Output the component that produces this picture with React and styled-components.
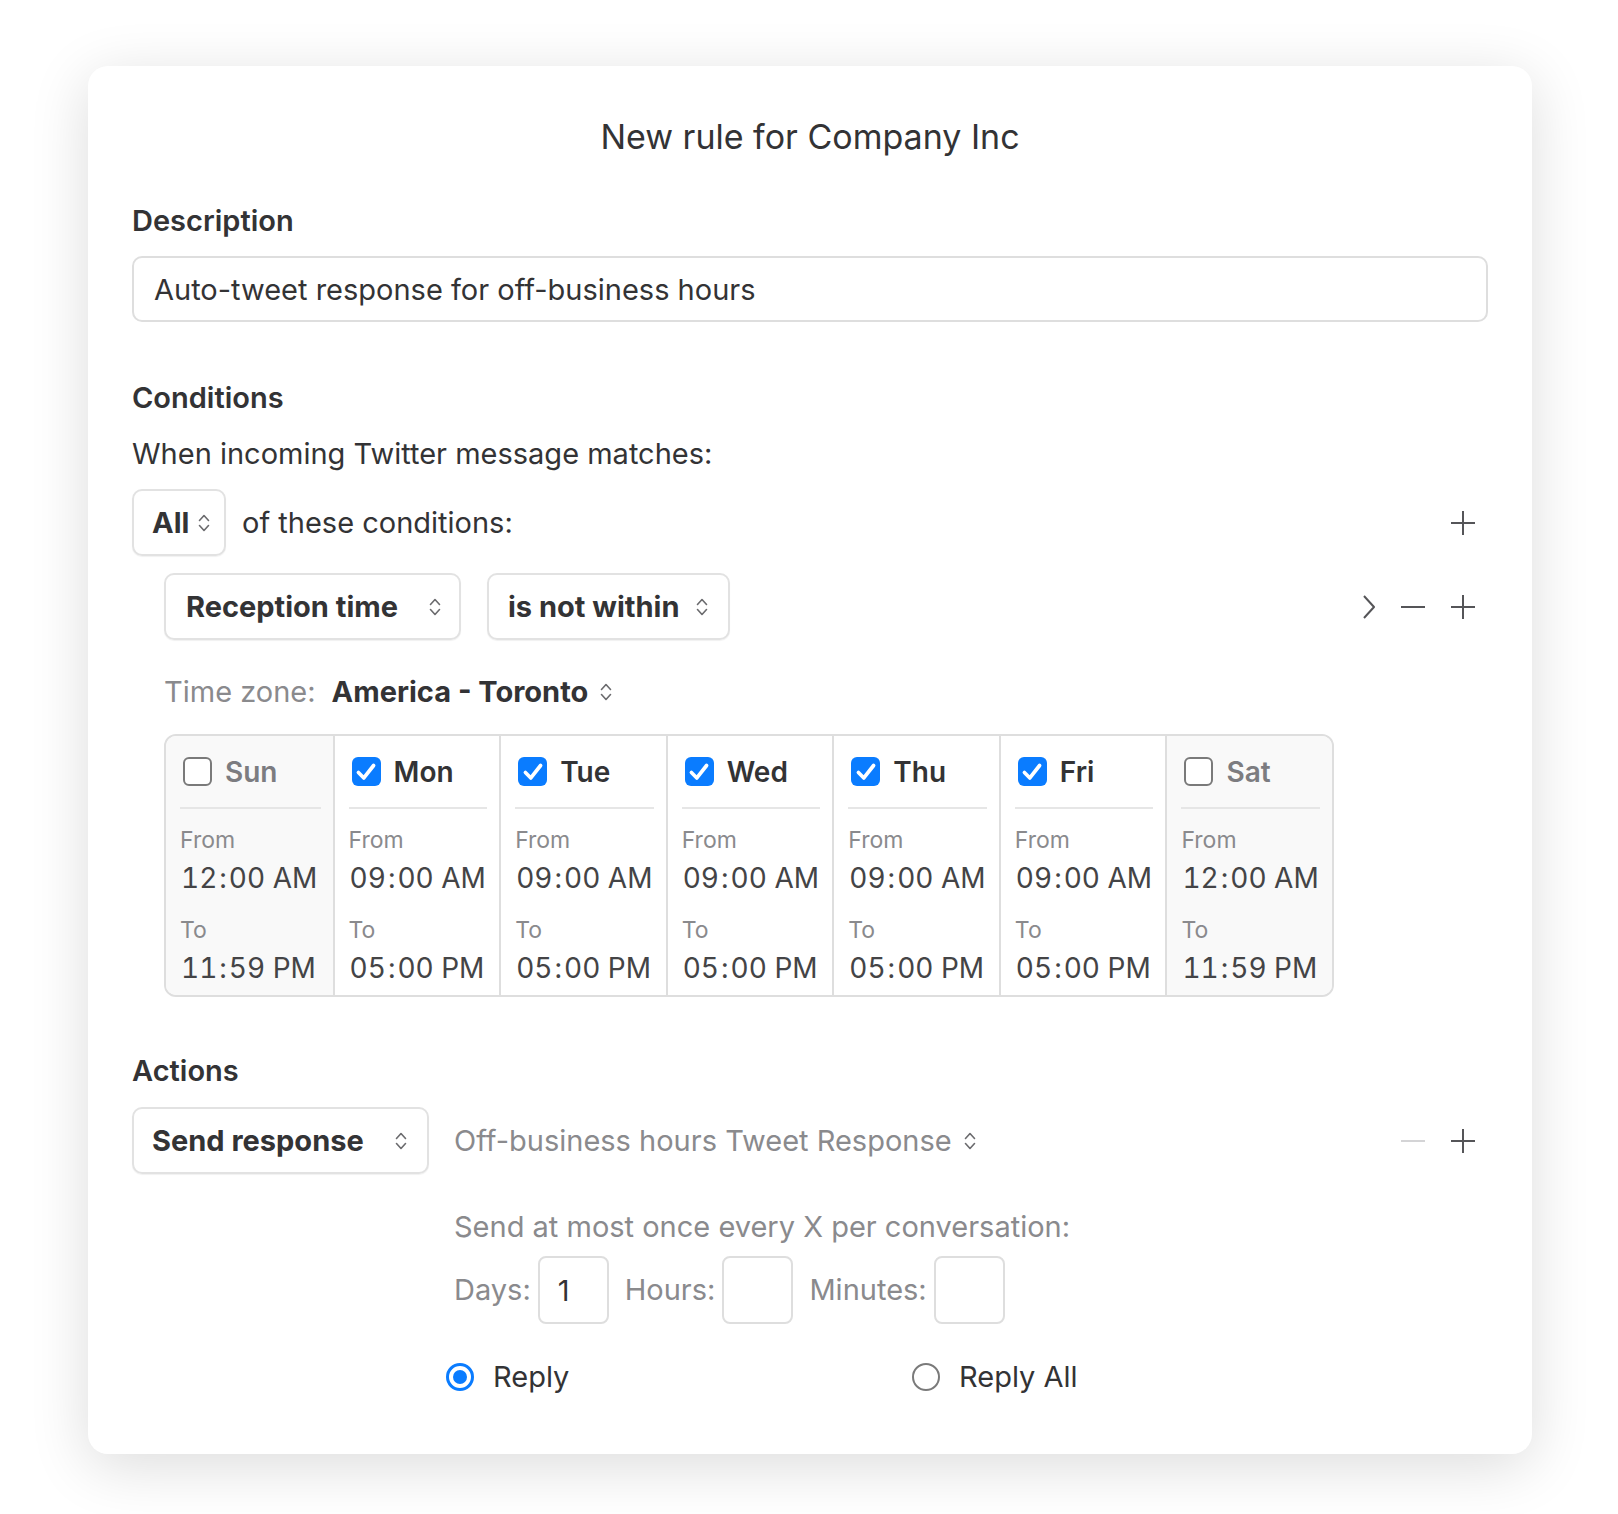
import React from "react";
import styled, { createGlobalStyle } from "styled-components";

const GlobalStyle = createGlobalStyle`
  body {
    margin: 0;
    background: #fff;
    font-family: Inter, "Noto Sans", sans-serif;
    color: #333335;
  }
`;

const Page = styled.div`
  padding: 66px 86px 61px 88px;
`;
const Card = styled.div`
  background: #fff;
  border-radius: 20px;
  box-shadow: 0 12px 60px rgba(0, 0, 0, 0.14);
  padding: 50px 44px 59px;
`;
const Title = styled.h1`
  margin: 0;
  font-size: 34px;
  line-height: 42px;
  font-weight: 400;
  text-align: center;
  color: #333335;
`;
const Label = styled.h3`
  margin: ${(p) => p.top || 0}px 0 0;
  font-size: 29px;
  line-height: 36px;
  font-weight: 600;
  color: #333335;
`;
const Text = styled.p`
  margin: ${(p) => p.top || 0}px 0 0 ${(p) => p.left || 0}px;
  font-size: 29px;
  line-height: 36px;
  color: ${(p) => (p.muted ? "#8a8a8d" : "#333335")};
`;
const Input = styled.div`
  box-sizing: border-box;
  margin-top: 17px;
  height: 66px;
  border: 2px solid #dedede;
  border-radius: 10px;
  padding: 0 20px;
  display: flex;
  align-items: center;
  font-size: 29px;
  color: #333335;
`;
const Row = styled.div`
  display: flex;
  align-items: center;
  margin: ${(p) => p.top || 0}px 0 0 ${(p) => p.indent || 0}px;
`;
const Select = styled.div`
  box-sizing: border-box;
  width: ${(p) => p.width}px;
  height: 67px;
  border: 2px solid #e2e2e2;
  border-radius: 10px;
  box-shadow: 0 1px 1px rgba(0, 0, 0, 0.06);
  padding: 0 ${(p) => p.right || 16}px 0 ${(p) => p.left || 18}px;
  display: flex;
  align-items: center;
  justify-content: space-between;
  font-size: 29px;
  font-weight: 700;
  color: #333335;
  margin-right: ${(p) => p.gap || 0}px;
`;
const Inline = styled.span`
  display: inline-flex;
  align-items: center;
  gap: ${(p) => p.gap || 10}px;
  font-size: 29px;
  line-height: 36px;
  font-weight: ${(p) => (p.bold ? 700 : 400)};
  color: ${(p) => (p.muted ? "#8a8a8d" : "#333335")};
  margin-right: ${(p) => p.right || 0}px;
`;
const Tools = styled.div`
  margin-left: auto;
  margin-right: 13px;
  display: flex;
  align-items: center;
  gap: 26px;
`;
const Week = styled.div`
  margin: 24px 0 0 32px;
  width: 1170px;
  box-sizing: border-box;
  border: 2px solid #dedede;
  border-radius: 12px;
  overflow: hidden;
  display: grid;
  grid-template-columns: repeat(7, minmax(0, 1fr));
`;
const Day = styled.div`
  min-width: 0;
  background: ${(p) => (p.off ? "#f9f9f9" : "#fff")};
  border-left: ${(p) => (p.first ? "none" : "2px solid #dedede")};
  padding: 0 12px 9px 14px;
`;
const DayHead = styled.div`
  height: 71px;
  border-bottom: 2px solid #e6e6e6;
  display: flex;
  align-items: center;
  gap: 13px;
  padding-left: 3px;
  font-size: 28px;
  font-weight: 600;
  color: ${(p) => (p.off ? "#7c7c80" : "#333335")};
`;
const Box = styled.span`
  box-sizing: border-box;
  width: 29px;
  height: 29px;
  border-radius: 6px;
  border: ${(p) => (p.checked ? "none" : "2px solid #7a7a7a")};
  background: ${(p) => (p.checked ? "#0a7cff" : "#fff")};
  display: flex;
  align-items: center;
  justify-content: center;
`;
const Small = styled.div`
  margin-top: ${(p) => p.top}px;
  font-size: 23px;
  line-height: 30px;
  color: #8a8a8d;
`;
const Time = styled.div`
  margin-top: 5px;
  padding-left: 1px;
  font-size: 28px;
  line-height: 36px;
  font-variant-numeric: tabular-nums;
  color: #444446;
  white-space: nowrap;
`;
const Colon = styled.span`
  margin: 0 2px;
`;
const Sub = styled.div`
  margin-left: 322px;
`;
const Field = styled.div`
  box-sizing: border-box;
  width: 71px;
  height: 68px;
  border: 2px solid #dedede;
  border-radius: 8px;
  padding-left: 18px;
  display: flex;
  align-items: center;
  font-size: 29px;
  color: #333335;
  margin: 0 16px 0 7px;
`;
const Radios = styled.div`
  display: flex;
  margin: 35px 0 0 314px;
`;
const Radio = styled.label`
  width: 466px;
  display: flex;
  align-items: center;
  gap: 19px;
  font-size: 29px;
  line-height: 36px;
  color: #333335;
`;
const Dot = styled.span`
  box-sizing: border-box;
  width: 28px;
  height: 28px;
  border-radius: 50%;
  border: ${(p) => (p.on ? "3px solid #0a7cff" : "2px solid #7a7a7a")};
  display: flex;
  align-items: center;
  justify-content: center;
  &::after {
    content: "";
    display: ${(p) => (p.on ? "block" : "none")};
    width: 14px;
    height: 14px;
    border-radius: 50%;
    background: #0a7cff;
  }
`;

const UpDown = () => (
  <svg width="12" height="22" viewBox="0 0 12 22" fill="none" stroke="#6b6b6e" strokeWidth="1.6" strokeLinecap="round" strokeLinejoin="round">
    <path d="M1.5 8.5 L6 3.5 L10.5 8.5" />
    <path d="M1.5 13.5 L6 18.5 L10.5 13.5" />
  </svg>
);
const Plus = () => (
  <svg width="24" height="24" viewBox="0 0 24 24" stroke="#555558" strokeWidth="2">
    <path d="M12 0 V24 M0 12 H24" />
  </svg>
);
const Minus = ({ light }) => (
  <svg width="24" height="24" viewBox="0 0 24 24" stroke={light ? "#d4d4d6" : "#555558"} strokeWidth="2">
    <path d="M0 12 H24" />
  </svg>
);
const Chevron = () => (
  <svg width="12" height="24" viewBox="0 0 12 24" fill="none" stroke="#555558" strokeWidth="2" strokeLinejoin="round">
    <path d="M1 1 L11 12 L1 23" />
  </svg>
);
const Check = () => (
  <svg width="26" height="26" viewBox="0 0 24 24" fill="none" stroke="#fff" strokeWidth="3.4" strokeLinecap="round" strokeLinejoin="round">
    <path d="M5 12.5 L10 17.5 L19 6" />
  </svg>
);

const Clock = ({ value }) => {
  const [hh, rest] = value.split(":");
  return (
    <Time>
      {hh}
      <Colon>:</Colon>
      {rest}
    </Time>
  );
};

const days = [
  { name: "Sun", on: false, from: "12:00 AM", to: "11:59 PM" },
  { name: "Mon", on: true, from: "09:00 AM", to: "05:00 PM" },
  { name: "Tue", on: true, from: "09:00 AM", to: "05:00 PM" },
  { name: "Wed", on: true, from: "09:00 AM", to: "05:00 PM" },
  { name: "Thu", on: true, from: "09:00 AM", to: "05:00 PM" },
  { name: "Fri", on: true, from: "09:00 AM", to: "05:00 PM" },
  { name: "Sat", on: false, from: "12:00 AM", to: "11:59 PM" },
];

export default function App() {
  return (
    <Page>
      <GlobalStyle />
      <Card>
        <Title>New rule for Company Inc</Title>

        <Label top={45}>Description</Label>
        <Input>Auto-tweet response for off-business hours</Input>

        <Label top={58}>Conditions</Label>
        <Text top={20}>When incoming Twitter message matches:</Text>
        <Row top={17}>
          <Select width={94} right={14} gap={16}>
            All <UpDown />
          </Select>
          <Inline>of these conditions:</Inline>
          <Tools>
            <Plus />
          </Tools>
        </Row>
        <Row top={17} indent={32}>
          <Select width={297} left={20} right={18} gap={26}>
            Reception time <UpDown />
          </Select>
          <Select width={243} left={19} right={20}>
            is not within <UpDown />
          </Select>
          <Tools>
            <Chevron />
            <Minus />
            <Plus />
          </Tools>
        </Row>
        <Row top={34} indent={32}>
          <Inline muted right={16}>Time zone:</Inline>
          <Inline bold gap={12}>
            America - Toronto <UpDown />
          </Inline>
        </Row>

        <Week>
          {days.map((d, i) => (
            <Day key={d.name} off={!d.on} first={i === 0}>
              <DayHead off={!d.on}>
                <Box checked={d.on}>{d.on && <Check />}</Box>
                {d.name}
              </DayHead>
              <Small top={16}>From</Small>
              <Clock value={d.from} />
              <Small top={19}>To</Small>
              <Clock value={d.to} />
            </Day>
          ))}
        </Week>

        <Label top={56}>Actions</Label>
        <Row top={18}>
          <Select width={297} left={18} right={20} gap={25}>
            Send response <UpDown />
          </Select>
          <Inline muted gap={12}>
            Off-business hours Tweet Response <UpDown />
          </Inline>
          <Tools>
            <Minus light />
            <Plus />
          </Tools>
        </Row>
        <Sub>
          <Text muted top={35}>Send at most once every X per conversation:</Text>
          <Row top={11}>
            <Inline muted>Days:</Inline>
            <Field>1</Field>
            <Inline muted>Hours:</Inline>
            <Field />
            <Inline muted>Minutes:</Inline>
            <Field />
          </Row>
        </Sub>
        <Radios>
          <Radio>
            <Dot on />
            Reply
          </Radio>
          <Radio>
            <Dot />
            Reply All
          </Radio>
        </Radios>
      </Card>
    </Page>
  );
}
